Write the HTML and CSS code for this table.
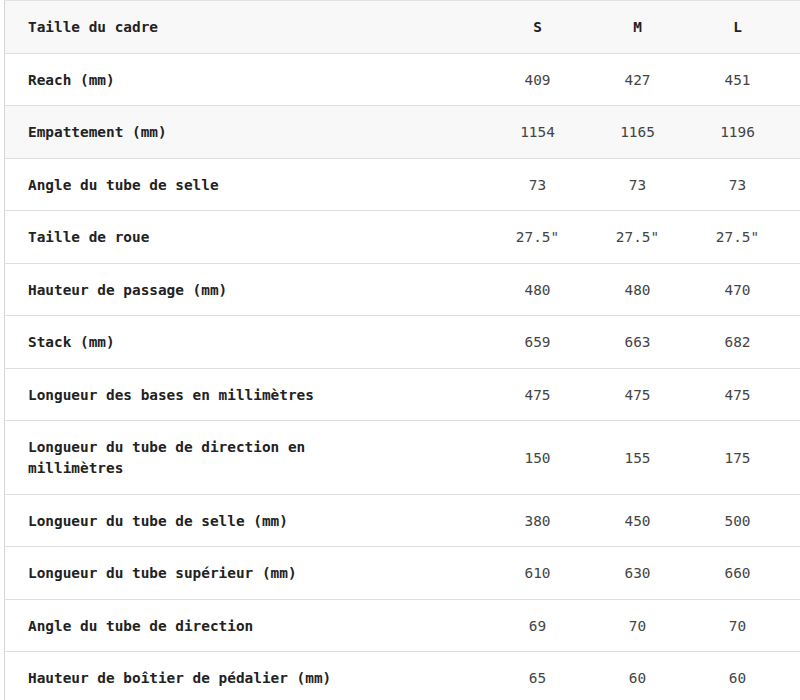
FILE: index.html
```html
<!DOCTYPE html>
<html lang="fr">
<head>
<meta charset="utf-8">
<title>Géométrie</title>
<link rel="stylesheet" href="styles.css">
</head>
<body>
<div class="wrap">
<table class="geo">
  <colgroup>
    <col class="c-label">
    <col class="c-size">
    <col class="c-size">
    <col class="c-last">
  </colgroup>
  <thead>
    <tr class="shade">
      <th class="label">Taille du cadre</th>
      <th>S</th>
      <th>M</th>
      <th class="last">L</th>
    </tr>
  </thead>
  <tbody>
    <tr><th class="label">Reach (mm)</th><td>409</td><td>427</td><td class="last">451</td></tr>
    <tr class="shade"><th class="label">Empattement (mm)</th><td>1154</td><td>1165</td><td class="last">1196</td></tr>
    <tr><th class="label">Angle du tube de selle</th><td>73</td><td>73</td><td class="last">73</td></tr>
    <tr><th class="label">Taille de roue</th><td>27.5"</td><td>27.5"</td><td class="last">27.5"</td></tr>
    <tr><th class="label">Hauteur de passage (mm)</th><td>480</td><td>480</td><td class="last">470</td></tr>
    <tr><th class="label">Stack (mm)</th><td>659</td><td>663</td><td class="last">682</td></tr>
    <tr><th class="label">Longueur des bases en millimètres</th><td>475</td><td>475</td><td class="last">475</td></tr>
    <tr><th class="label">Longueur du tube de direction en millimètres</th><td>150</td><td>155</td><td class="last">175</td></tr>
    <tr><th class="label">Longueur du tube de selle (mm)</th><td>380</td><td>450</td><td class="last">500</td></tr>
    <tr><th class="label">Longueur du tube supérieur (mm)</th><td>610</td><td>630</td><td class="last">660</td></tr>
    <tr><th class="label">Angle du tube de direction</th><td>69</td><td>70</td><td class="last">70</td></tr>
    <tr><th class="label">Hauteur de boîtier de pédalier (mm)</th><td>65</td><td>60</td><td class="last">60</td></tr>
  </tbody>
</table>
</div>
</body>
</html>
```
FILE: styles.css
```css
html, body {
  margin: 0;
  padding: 0;
  background: #ffffff;
  overflow: hidden;
}
.wrap {
  padding-left: 4px;
}
.geo {
  width: 796px;
  border-collapse: collapse;
  table-layout: fixed;
  border-top: 1px solid #e2e2e2;
  border-left: 1px solid #d6d6d6;
  font-family: "DejaVu Sans Mono", "Liberation Mono", monospace;
  font-size: 14.4px;
  line-height: 21px;
  color: #444444;
}
.c-label { width: 483px; }
.c-size { width: 100px; }
.c-last { width: 113px; }
.geo th, .geo td {
  padding: 16px 0 14.5px 0;
  border-bottom: 1px solid #dedede;
  text-align: center;
  vertical-align: middle;
}
.geo th {
  font-weight: bold;
  color: #222222;
}
.geo .label {
  text-align: left;
  padding-left: 23px;
  padding-right: 120px;
}
.geo .last {
  padding-right: 13px;
}
.shade {
  background: #f8f8f8;
}
```
